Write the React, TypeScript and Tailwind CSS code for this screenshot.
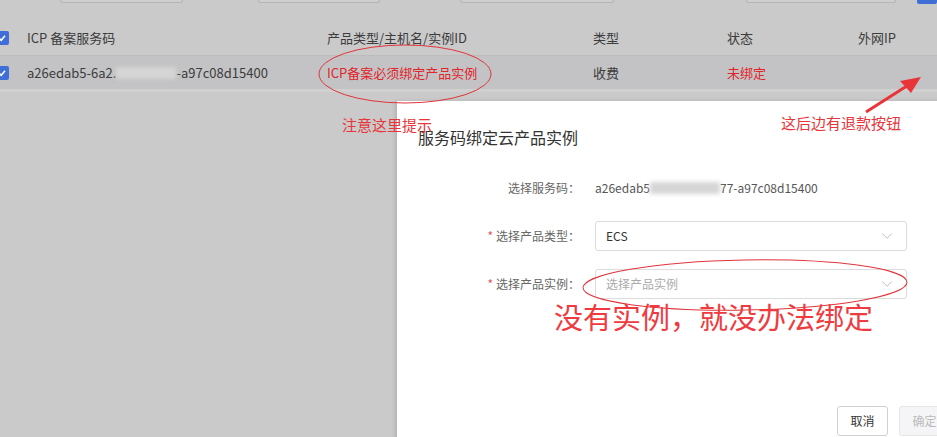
import { ChevronDown } from "lucide-react";

const font = { fontFamily: '"Noto Sans CJK SC", "Noto Sans", sans-serif' };

function Check() {
  return (
    <div className="w-[14px] h-[14px] rounded-[2px] bg-[#3f6fd6] flex items-center justify-center -ml-[5px]">
      <svg width="10" height="10" viewBox="0 0 10 10">
        <path d="M2 5.2 L4.2 7.3 L8 2.8" stroke="#fff" strokeWidth="1.5" fill="none" />
      </svg>
    </div>
  );
}

function Blur({ w }: { w: number }) {
  return (
    <span
      className="inline-block h-[12px] bg-[#d6d6d6] blur-[2px] align-middle"
      style={{ width: w }}
    />
  );
}

function Field({ label, required, children }: { label: string; required?: boolean; children: React.ReactNode }) {
  return (
    <div className="flex items-center">
      <div className="w-[198px] text-right text-[12px] text-[#666] pr-[15px]">
        {required && <span className="text-[#f0535b] mr-[3px]">*</span>}
        {label}
      </div>
      {children}
    </div>
  );
}

export default function App() {
  return (
    <div className="relative w-[937px] h-[437px] overflow-hidden bg-[#cacaca]" style={font}>
      {/* faded toolbar inputs */}
      <div className="flex h-[3px]">
        <div className="ml-[60px] w-[123px] h-[3px] border-b border-x border-[#b5b5b5] rounded-b-[3px] bg-[#cfcfcf]" />
        <div className="ml-[75px] w-[122px] h-[3px] border-b border-x border-[#b5b5b5] rounded-b-[3px] bg-[#cfcfcf]" />
        <div className="ml-[80px] w-[155px] h-[3px] border-b border-x border-[#b5b5b5] rounded-b-[3px] bg-[#cfcfcf]" />
        <div className="ml-[132px] w-[150px] h-[3px] border-b border-x border-[#b5b5b5] rounded-b-[3px] bg-[#cfcfcf]" />
        <div className="ml-[21px] w-[20px] h-[4px] rounded-b-[2px] bg-[#3f6fd6]" />
      </div>

      {/* table header */}
      <div className="flex items-center h-[36px] mt-[17px] text-[13px] text-[#3c3c3c] border-b border-[#bcbcbc]">
        <div className="w-[27px]"><Check /></div>
        <div className="w-[300px]">ICP 备案服务码</div>
        <div className="w-[266px]">产品类型/主机名/实例ID</div>
        <div className="w-[134px]">类型</div>
        <div className="w-[131px]">状态</div>
        <div>外网IP</div>
      </div>

      {/* table row */}
      <div className="flex items-center h-[36px] bg-[#c3c3c5] text-[13px] text-[#3c3c3c] border-b-[3px] border-[#d0d0d0]">
        <div className="w-[27px]"><Check /></div>
        <div className="w-[300px] flex items-center">
          a26edab5-6a2.
          <Blur w={60} />
          -a97c08d15400
        </div>
        <div className="w-[266px] text-[#e0252b]">ICP备案必须绑定产品实例</div>
        <div className="w-[134px]">收费</div>
        <div className="w-[131px] text-[#e0252b]">未绑定</div>
      </div>

      {/* bind dialog */}
      <div className="absolute left-[397px] top-[101px] w-[560px] h-[340px] bg-white shadow-[-2px_0_4px_rgba(0,0,0,0.12)]">
        <div className="pl-[21px] pt-[24px] text-[16px] text-[#333]">服务码绑定云产品实例</div>
        <div className="mt-[24px] flex flex-col gap-[18px]">
          <Field label="选择服务码：">
            <div className="flex items-center text-[12px] text-[#555] h-[30px]">
              a26edab5
              <Blur w={70} />
              77-a97c08d15400
            </div>
          </Field>
          <Field label="选择产品类型：" required>
            <div className="w-[312px] h-[30px] border border-[#dcdcdc] rounded-[3px] flex items-center justify-between px-[10px] text-[12px] text-[#333]">
              ECS
              <ChevronDown size={18} strokeWidth={1} className="text-[#aaa]" />
            </div>
          </Field>
          <Field label="选择产品实例：" required>
            <div className="w-[312px] h-[30px] border border-[#dcdcdc] rounded-[3px] flex items-center justify-between px-[10px] text-[12px] text-[#aaa]">
              选择产品实例
              <ChevronDown size={18} strokeWidth={1} className="text-[#aaa]" />
            </div>
          </Field>
        </div>
        <div className="absolute left-[440px] top-[305px] flex gap-[11px]">
          <div className="w-[51px] h-[30px] border border-[#d0d0d0] rounded-[3px] flex items-center justify-center text-[12px] text-[#333]">取消</div>
          <div className="w-[51px] h-[30px] border border-[#e6e6e6] bg-[#f5f5f7] rounded-[3px] flex items-center justify-center text-[12px] text-[#bbb]">确定</div>
        </div>
      </div>

      {/* annotations */}
      <svg className="absolute inset-0 pointer-events-none" width="937" height="437">
        <ellipse cx="405" cy="74" rx="86" ry="29" stroke="#e0353b" strokeWidth="1" fill="none" />
        <ellipse cx="745" cy="285" rx="162" ry="25" stroke="#e0353b" strokeWidth="1" fill="none" transform="rotate(-1 745 285)" />
        <path d="M866 112 L910 84" stroke="#e8353a" strokeWidth="3" />
        <path d="M921 77 L900 81 L911 93 Z" fill="#e8353a" />
      </svg>
      <div className="absolute left-[342px] top-[114px] text-[15px] text-[#e8353a]">注意这里提示</div>
      <div className="absolute left-[781px] top-[112px] text-[15px] text-[#e8353a]">这后边有退款按钮</div>
      <div className="absolute left-[554px] top-[296px] text-[29px] text-[#ef3b3f] leading-[40px]">没有实例，就没办法绑定</div>
    </div>
  );
}
